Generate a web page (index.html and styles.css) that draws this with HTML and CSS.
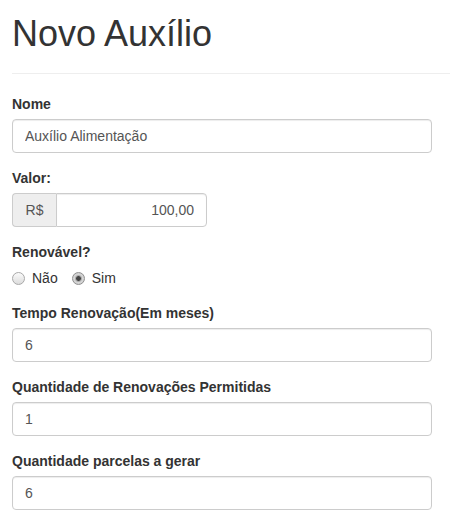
FILE: index.html
```html
<!DOCTYPE html>
<html lang="pt-BR">
<head>
    <meta charset="UTF-8">
    <meta name="viewport" content="width=device-width, initial-scale=1.0">
    <title>Novo Auxílio</title>
    <link rel="stylesheet" href="styles.css">
</head>
<body>
    <div class="page">
        <div class="page-header">
            <h1>Novo Auxílio</h1>
        </div>

        <form class="form">
            <div class="form-group">
                <label class="control-label" for="nome">Nome</label>
                <input type="text" id="nome" class="form-control" value="Auxílio Alimentação">
            </div>

            <div class="form-group">
                <label class="control-label" for="valor">Valor:</label>
                <div class="input-group">
                    <span class="input-group-addon">R$</span>
                    <input type="text" id="valor" class="form-control text-right" value="100,00">
                </div>
            </div>

            <div class="form-group">
                <label class="control-label">Renovável?</label>
                <div class="radios">
                    <label class="radio-inline"><input type="radio" name="renovavel" value="0"><span>Não</span></label>
                    <label class="radio-inline"><input type="radio" name="renovavel" value="1" checked><span>Sim</span></label>
                </div>
            </div>

            <div class="form-group">
                <label class="control-label" for="tempo">Tempo Renovação(Em meses)</label>
                <input type="text" id="tempo" class="form-control" value="6">
            </div>

            <div class="form-group">
                <label class="control-label" for="renovacoes">Quantidade de Renovações Permitidas</label>
                <input type="text" id="renovacoes" class="form-control" value="1">
            </div>

            <div class="form-group">
                <label class="control-label" for="parcelas">Quantidade parcelas a gerar</label>
                <input type="text" id="parcelas" class="form-control" value="6">
            </div>
        </form>
    </div>
</body>
</html>
```

FILE: styles.css
```css
* {
    box-sizing: border-box;
}
body {
    margin: 0;
    font-family: "Liberation Sans", Arial, sans-serif;
    font-size: 14px;
    line-height: 20px;
    color: #333;
    background-color: #fff;
}
.page {
    padding-left: 12px;
}
.page-header {
    padding-bottom: 9px;
    margin: 0 0 20px;
    border-bottom: 1px solid #eee;
}
.page-header h1 {
    margin: 14px 0 10px;
    font-size: 36px;
    font-weight: 500;
    line-height: 1.1;
    color: #333;
}
.form {
    width: 420px;
}
.form-group {
    margin-bottom: 15px;
}
.control-label {
    display: inline-block;
    margin-bottom: 5px;
    font-weight: bold;
}
.form-control {
    display: block;
    width: 100%;
    height: 34px;
    padding: 6px 12px;
    font-family: inherit;
    font-size: 14px;
    line-height: 20px;
    color: #555;
    background-color: #fff;
    border: 1px solid #ccc;
    border-radius: 4px;
    box-shadow: inset 0 1px 1px rgba(0, 0, 0, 0.075);
}
.text-right {
    text-align: right;
}
.input-group {
    display: flex;
    width: 195px;
}
.input-group-addon {
    width: 44px;
    padding: 6px 0;
    text-align: center;
    font-size: 14px;
    line-height: 20px;
    color: #555;
    background-color: #eee;
    border: 1px solid #ccc;
    border-right: none;
    border-radius: 4px 0 0 4px;
}
.input-group .form-control {
    flex: 1;
    border-radius: 0 4px 4px 0;
}
.radios {
    display: flex;
    gap: 14px;
    margin-top: 1px;
}
.radio-inline {
    display: flex;
    align-items: flex-start;
    gap: 7px;
    font-weight: normal;
}
.radio-inline input {
    appearance: none;
    -webkit-appearance: none;
    width: 13px;
    height: 13px;
    margin: 4px 0 0;
    border: 1px solid #a9a9a9;
    border-radius: 50%;
    background: linear-gradient(#fbfbfb, #dcdcdc);
}
.radio-inline input:checked {
    background: radial-gradient(circle, #444 0, #444 2px, #9a9a9a 2.6px, #d6d6d6 4px, #c9c9c9 100%);
    border-color: #8f8f8f;
}
```
